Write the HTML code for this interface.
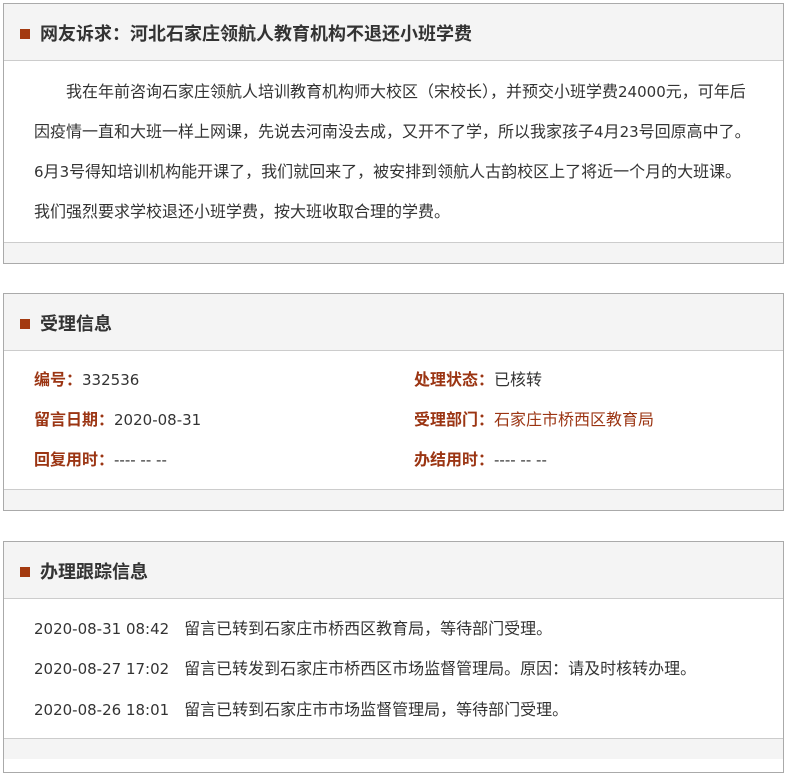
<!DOCTYPE html>
<html><head><meta charset="utf-8"><style>
body{margin:0;background:#fff;font-family:"DejaVu Sans","Noto Sans CJK SC",sans-serif;color:#333;width:790px;height:745px;overflow:hidden;position:relative}
.box{position:absolute;left:3px;width:779px;border:1px solid #aaa;background:#fff}
.hd{height:56px;background:#f4f4f4;border-bottom:1px solid #ccc;position:relative}
.hd i{position:absolute;left:16px;top:25px;width:10px;height:10px;background:#a33a10}
.hd b{position:absolute;left:36px;top:17px;font-size:18px;line-height:26px;color:#333;font-family:"Liberation Sans","Noto Sans CJK SC",sans-serif}
.ft{height:20px;background:#f4f4f4;border-top:1px solid #ccc}
.p{padding:11px 10px 10px 30px;font-size:16px;line-height:40px;white-space:nowrap}
.row{position:absolute;font-size:16px;line-height:20px;white-space:nowrap}
.n{font-size:15px}
.l{color:#9b3513;font-weight:bold}
.r{color:#9b3513}
</style></head><body>
<div class="box" style="top:3px">
<div class="hd"><i></i><b>网友诉求：河北石家庄领航人教育机构不退还小班学费</b></div>
<div class="p" style="height:160px;">&emsp;&emsp;我在年前咨询石家庄领航人培训教育机构师大校区（宋校长），并预交小班学费<span class="n">24000</span>元，可年后<br>因疫情一直和大班一样上网课，先说去河南没去成，又开不了学，所以我家孩子<span class="n">4</span>月<span class="n">23</span>号回原高中了。<br><span class="n">6</span>月<span class="n">3</span>号得知培训机构能开课了，我们就回来了，被安排到领航人古韵校区上了将近一个月的大班课。<br>我们强烈要求学校退还小班学费，按大班收取合理的学费。</div>
<div class="ft"></div>
</div>
<div class="box" style="top:293px;height:216px">
<div class="hd"><i></i><b>受理信息</b></div>
<div class="row" style="left:30px;top:76px"><span class="l">编号：</span><span class="n">332536</span></div>
<div class="row" style="left:410px;top:76px"><span class="l">处理状态：</span>已核转</div>
<div class="row" style="left:30px;top:116px"><span class="l">留言日期：</span><span class="n">2020-08-31</span></div>
<div class="row" style="left:410px;top:116px"><span class="l">受理部门：</span><span class="r">石家庄市桥西区教育局</span></div>
<div class="row" style="left:30px;top:156px"><span class="l">回复用时：</span><span class="n">---- -- --</span></div>
<div class="row" style="left:410px;top:156px"><span class="l">办结用时：</span><span class="n">---- -- --</span></div>
<div class="ft" style="position:absolute;left:0;right:0;top:195px"></div>
</div>
<div class="box" style="top:541px;height:230px">
<div class="hd"><i></i><b>办理跟踪信息</b></div>
<div class="row" style="left:30px;top:77px"><span class="n">2020-08-31 08:42&emsp;</span>留言已转到石家庄市桥西区教育局，等待部门受理。</div>
<div class="row" style="left:30px;top:117px"><span class="n">2020-08-27 17:02&emsp;</span>留言已转发到石家庄市桥西区市场监督管理局。原因：请及时核转办理。</div>
<div class="row" style="left:30px;top:158px"><span class="n">2020-08-26 18:01&emsp;</span>留言已转到石家庄市市场监督管理局，等待部门受理。</div>
<div class="ft" style="position:absolute;left:0;right:0;top:196px"></div>
</div>
</body></html>
